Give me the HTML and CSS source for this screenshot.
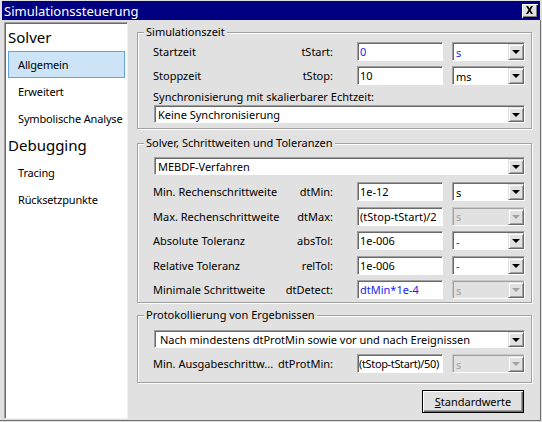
FILE: index.html
```html
<!DOCTYPE html>
<html lang="de">
  <head>
    <meta charset="UTF-8" />
    <title>Simulationssteuerung</title>
    <link rel="stylesheet" href="styles.css">
  </head>
  <body>
    <div class="window">
      <div class="titlebar">
        <span class="title">Simulationssteuerung</span>
        <span class="close-btn">
          <svg width="9" height="8" viewBox="0 0 9 8">
            <path d="M1 0h2l1.5 2.5L6 0h2L5.5 4 8 8H6L4.5 5.5 3 8H1l2.5-4z" fill="#000" />
          </svg>
        </span>
      </div>

      <div class="client">
        <nav class="sidebar">
          <div class="nav-head">Solver</div>
          <div class="nav-item selected">Allgemein</div>
          <div class="nav-item">Erweitert</div>
          <div class="nav-item">Symbolische Analyse</div>
          <div class="nav-head">Debugging</div>
          <div class="nav-item">Tracing</div>
          <div class="nav-item">Rücksetzpunkte</div>
        </nav>

        <main class="panel">
          <!-- Simulationszeit -->
          <section class="group group-sim">
            <div class="group-title">Simulationszeit</div>
            <div class="group-body">
              <div class="row">
                <div class="row-label"><span>Startzeit</span><span>tStart:</span></div>
                <div class="field blue">0</div>
                <div class="combo">
                  <span class="combo-text blue">s</span>
                  <span class="combo-btn"></span>
                </div>
              </div>
              <div class="row">
                <div class="row-label"><span>Stoppzeit</span><span>tStop:</span></div>
                <div class="field">10</div>
                <div class="combo">
                  <span class="combo-text">ms</span>
                  <span class="combo-btn"></span>
                </div>
              </div>
              <div class="caption">Synchronisierung mit skalierbarer Echtzeit:</div>
              <div class="combo wide">
                <span class="combo-text">Keine Synchronisierung</span>
                <span class="combo-btn"></span>
              </div>
            </div>
          </section>

          <!-- Solver -->
          <section class="group group-solver">
            <div class="group-title">Solver, Schrittweiten und Toleranzen</div>
            <div class="group-body">
              <div class="combo wide">
                <span class="combo-text">MEBDF-Verfahren</span>
                <span class="combo-btn"></span>
              </div>
              <div class="row">
                <div class="row-label"><span>Min. Rechenschrittweite</span><span>dtMin:</span></div>
                <div class="field">1e-12</div>
                <div class="combo">
                  <span class="combo-text">s</span>
                  <span class="combo-btn"></span>
                </div>
              </div>
              <div class="row">
                <div class="row-label"><span>Max. Rechenschrittweite</span><span>dtMax:</span></div>
                <div class="field">(tStop-tStart)/2</div>
                <div class="combo disabled">
                  <span class="combo-text">s</span>
                  <span class="combo-btn"></span>
                </div>
              </div>
              <div class="row">
                <div class="row-label"><span>Absolute Toleranz</span><span>absTol:</span></div>
                <div class="field">1e-006</div>
                <div class="combo">
                  <span class="combo-text blue">-</span>
                  <span class="combo-btn"></span>
                </div>
              </div>
              <div class="row">
                <div class="row-label"><span>Relative Toleranz</span><span>relTol:</span></div>
                <div class="field">1e-006</div>
                <div class="combo">
                  <span class="combo-text blue">-</span>
                  <span class="combo-btn"></span>
                </div>
              </div>
              <div class="row">
                <div class="row-label"><span>Minimale Schrittweite</span><span>dtDetect:</span></div>
                <div class="field blue">dtMin*1e-4</div>
                <div class="combo disabled">
                  <span class="combo-text">s</span>
                  <span class="combo-btn"></span>
                </div>
              </div>
            </div>
          </section>

          <!-- Protokollierung -->
          <section class="group group-log">
            <div class="group-title">Protokollierung von Ergebnissen</div>
            <div class="group-body">
              <div class="combo wide">
                <span class="combo-text">Nach mindestens dtProtMin sowie vor und nach Ereignissen</span>
                <span class="combo-btn"></span>
              </div>
              <div class="row">
                <div class="row-label"><span>Min. Ausgabeschrittw...</span><span>dtProtMin:</span></div>
                <div class="field field-tight">(tStop-tStart)/50)</div>
                <div class="combo disabled">
                  <span class="combo-text">s</span>
                  <span class="combo-btn"></span>
                </div>
              </div>
            </div>
          </section>

          <button class="std-btn"><u>S</u>tandardwerte</button>
        </main>
      </div>
    </div>
  </body>
</html>
```

FILE: styles.css
```css
* {
  margin: 0;
  padding: 0;
  box-sizing: border-box;
}

body {
  width: 542px;
  height: 422px;
  overflow: hidden;
  background: #e1e1e1;
  font-family: "Noto Sans", sans-serif;
  font-size: 11px;
  color: #000;
}

.window {
  height: 422px;
  display: flex;
  flex-direction: column;
  padding-top: 1px;
}

/* title bar */
.titlebar {
  height: 19px;
  margin: 0 2px;
  padding: 0 2px;
  background: #000080;
  color: #fff;
  font-size: 13px;
  display: flex;
  align-items: center;
  justify-content: space-between;
}

.close-btn {
  width: 16px;
  height: 14px;
  background: #e1e1e1;
  box-shadow: inset 1px 1px 0 #fff, inset -1px -1px 0 #000, inset -2px -2px 0 #808080;
  display: flex;
  align-items: center;
  justify-content: center;
  padding: 0 1px 1px 0;
}

.client {
  flex: 1;
  display: flex;
  margin: 0 1px 1px 0;
  border-right: 1px solid #6e6e6e;
  border-bottom: 1px solid #6e6e6e;
}

/* left navigation */
.sidebar {
  width: 124px;
  margin: 2px 0 1px 4px;
  padding: 1px 2px 0 3px;
  background: #fff;
  border: 1px solid;
  border-color: #a0a0a0 #f0f0f0 #f0f0f0 #a0a0a0;
  box-shadow: inset 1px 1px 0 #696969;
}

.nav-head {
  height: 27px;
  line-height: 27px;
  font-size: 15px;
}

.nav-item {
  height: 27px;
  line-height: 25px;
  padding-left: 9px;
  border: 1px solid transparent;
  white-space: nowrap;
  letter-spacing: -0.15px;
}

.nav-item.selected {
  background: #cde4f7;
  border-color: #5fa3e6;
}

/* right panel */
.panel {
  flex: 1;
  display: flex;
  flex-direction: column;
  padding: 12px 8px 0 9px;
}

.group {
  display: flex;
  flex-direction: column;
  border: 1px solid #a0a0a0;
  box-shadow: 1px 1px 0 #fff, inset 1px 1px 0 #fff;
}

.group-title {
  align-self: flex-start;
  height: 16px;
  line-height: 16px;
  margin: -9px 0 0 6px;
  padding: 0 2px;
  background: #e1e1e1;
}

.group-body {
  padding: 2px 6px 5px 15px;
}

.group-solver {
  margin-top: 14px;
}

.group-solver .group-body {
  padding-top: 6px;
  padding-bottom: 3px;
}

.group-log {
  margin-top: 12px;
}

.group-log .group-body {
  padding-top: 7px;
  padding-bottom: 9px;
}

.row {
  display: grid;
  grid-template-columns: 1fr 86px 73px;
  column-gap: 9px;
  height: 19px;
}

.group-sim .row + .row {
  margin-top: 5px;
}

.group-solver .combo.wide + .row {
  margin-top: 7px;
}

.group-solver .row + .row {
  margin-top: 5.5px;
}

.group-log .row {
  margin-top: 6px;
}

.row-label {
  display: flex;
  justify-content: space-between;
  align-items: center;
  padding-right: 15px;
  white-space: nowrap;
}

.caption {
  height: 16px;
  line-height: 16px;
  margin-top: 4px;
}

.blue {
  color: #2222ee;
}

/* text fields */
.field {
  display: flex;
  align-items: center;
  padding-left: 2px;
  background: #fff;
  border: 1px solid;
  border-color: #a0a0a0 #fff #fff #a0a0a0;
  box-shadow: inset 1px 1px 0 #696969;
  white-space: nowrap;
  overflow: hidden;
}

.field-tight {
  padding-left: 1px;
  letter-spacing: -0.35px;
}

/* combo boxes */
.combo {
  display: flex;
  padding: 1px 0 0 1px;
  background: #fff;
  border: 1px solid;
  border-color: #a0a0a0 #fff #fff #a0a0a0;
  box-shadow: inset 1px 1px 0 #696969;
}

.combo.wide {
  height: 18px;
  margin-left: 1px;
}

.combo-text {
  flex: 1;
  display: flex;
  align-items: center;
  padding-left: 2px;
  white-space: nowrap;
  overflow: hidden;
}

.group-log .combo.wide .combo-text {
  padding-left: 4px;
}

.combo-btn {
  width: 16px;
  display: flex;
  align-items: center;
  justify-content: center;
  background: #e1e1e1;
  border: 1px solid;
  border-color: #e1e1e1 #696969 #696969 #e1e1e1;
  box-shadow: inset 1px 1px 0 #fff, inset -1px -1px 0 #a0a0a0;
}

.combo-btn::after {
  content: "";
  border-left: 4px solid transparent;
  border-right: 4px solid transparent;
  border-top: 4px solid #000;
}

.combo.disabled {
  background: #e1e1e1;
  color: #a0a0a0;
  border-color: #c8c8c8 #fff #fff #c8c8c8;
  box-shadow: inset 1px 1px 0 #a0a0a0;
}

.combo.disabled .combo-btn::after {
  border-top-color: #a0a0a0;
}

/* default button */
.std-btn {
  align-self: flex-end;
  width: 102px;
  height: 23px;
  margin: 7px 8px 0 0;
  font: inherit;
  color: #000;
  background: #e1e1e1;
  border: 1px solid #000;
  box-shadow: inset 1px 1px 0 #fff, inset -1px -1px 0 #696969, inset -2px -2px 0 #a0a0a0;
}
```
